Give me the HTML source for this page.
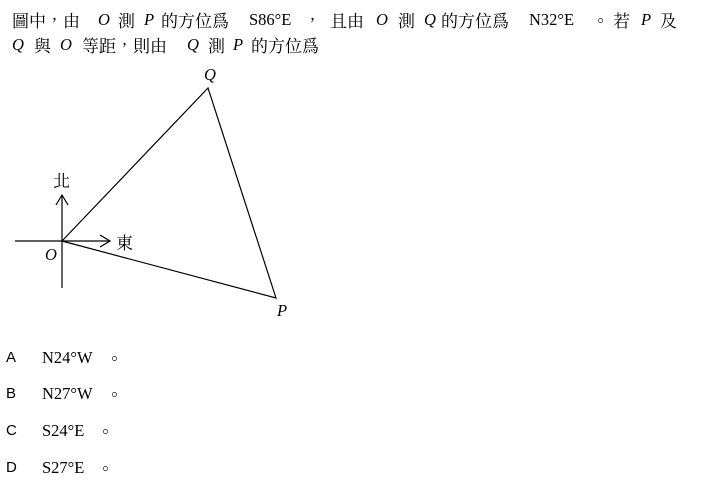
<!DOCTYPE html>
<html><head><meta charset="utf-8"><style>
body{margin:0;width:718px;height:478px;background:#fff;position:relative;font-family:"Liberation Serif","Noto Serif CJK TC",serif;color:#000;overflow:hidden}
.t{position:absolute;font-size:16.5px;line-height:16px;white-space:nowrap}
.c{position:absolute;font-size:17px;line-height:16px;white-space:nowrap;font-family:"Noto Serif CJK TC","Noto Serif CJK SC",serif;letter-spacing:0px}
.i{font-style:italic}
.s{position:absolute;font-family:"Liberation Sans",sans-serif;font-size:15px;line-height:15px}
</style></head><body>
<span class="c" style="left:12px;top:12px">圖中，由</span>
<span class="t i" style="left:98px;top:12px">O</span>
<span class="c" style="left:118px;top:12px">測</span>
<span class="t i" style="left:144px;top:12px">P</span>
<span class="c" style="left:161px;top:12px">的方位爲</span>
<span class="t" style="left:249px;top:12px">S86°E</span>
<span class="c" style="left:304px;top:12px">，</span>
<span class="c" style="left:330px;top:12px">且由</span>
<span class="t i" style="left:376px;top:12px">O</span>
<span class="c" style="left:398px;top:12px">測</span>
<span class="t i" style="left:424px;top:12px">Q</span>
<span class="c" style="left:441px;top:12px">的方位爲</span>
<span class="t" style="left:529px;top:12px">N32°E</span>
<span class="c" style="left:592px;top:12px">。</span>
<span class="c" style="left:613px;top:12px">若</span>
<span class="t i" style="left:641px;top:12px">P</span>
<span class="c" style="left:660px;top:12px">及</span>
<span class="t i" style="left:12px;top:37px">Q</span>
<span class="c" style="left:34px;top:37px">與</span>
<span class="t i" style="left:60px;top:37px">O</span>
<span class="c" style="left:82px;top:37px">等距，則由</span>
<span class="t i" style="left:187px;top:37px">Q</span>
<span class="c" style="left:208px;top:37px">測</span>
<span class="t i" style="left:233px;top:37px">P</span>
<span class="c" style="left:251px;top:37px">的方位爲</span>
<svg style="position:absolute;left:0;top:0" width="718" height="340">
<g stroke="#000" stroke-width="1.2" fill="none">
<line x1="62" y1="288" x2="62" y2="195"/>
<polyline points="56,205 62,195 68,205"/>
<line x1="15" y1="241" x2="110" y2="241"/>
<polyline points="100,235 110,241 100,247"/>
<polygon points="62,241 208,88 276,298"/>
</g></svg>
<span class="c" style="left:53px;top:172px">北</span>
<span class="c" style="left:116px;top:234px">東</span>
<span class="t i" style="left:45px;top:247px">O</span>
<span class="t i" style="left:204px;top:67px">Q</span>
<span class="t i" style="left:277px;top:303px">P</span>
<span class="s" style="left:6px;top:350px">A</span><span class="t" style="left:42px;top:350px">N24°W</span><span class="c" style="left:106px;top:350px">。</span>
<span class="s" style="left:6px;top:386px">B</span><span class="t" style="left:42px;top:386px">N27°W</span><span class="c" style="left:106px;top:386px">。</span>
<span class="s" style="left:6px;top:423px">C</span><span class="t" style="left:42px;top:423px">S24°E</span><span class="c" style="left:97px;top:423px">。</span>
<span class="s" style="left:6px;top:460px">D</span><span class="t" style="left:42px;top:460px">S27°E</span><span class="c" style="left:97px;top:460px">。</span>
</body></html>
